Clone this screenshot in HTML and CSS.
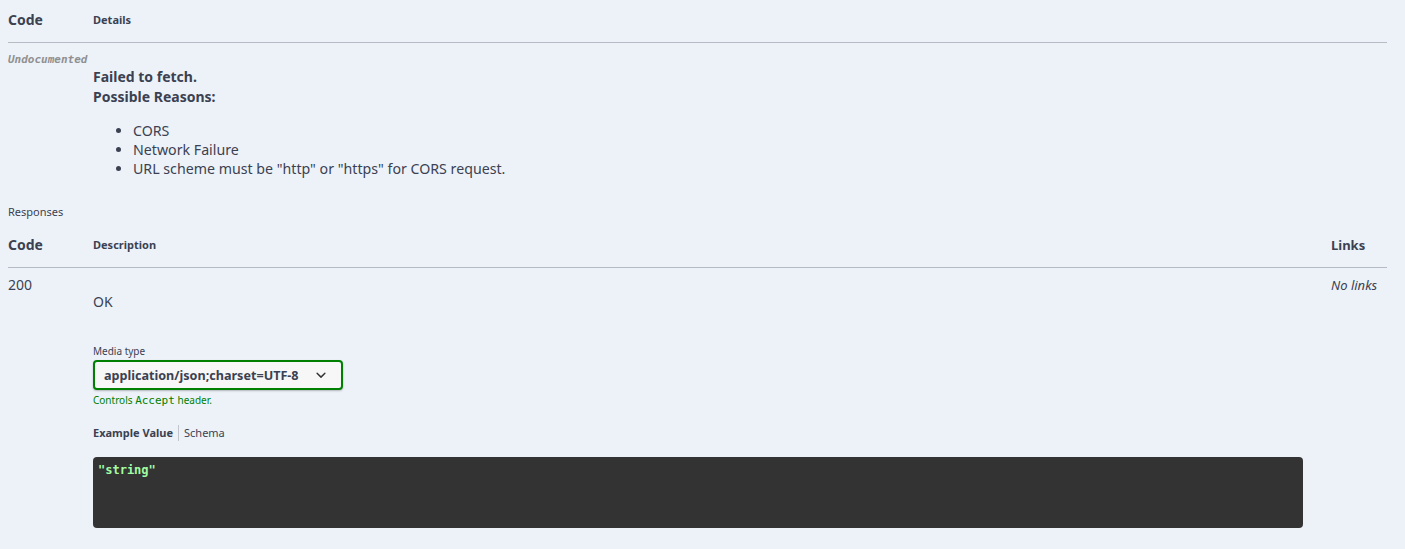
FILE: index.html
```html
<!DOCTYPE html>
<html lang="en">
<head>
<meta charset="utf-8">
<title>Responses</title>
<link rel="stylesheet" href="styles.css">
</head>
<body>
<div class="section">
  <div class="row head head-first">
    <div class="col-code th-code">Code</div>
    <div class="col-desc th">Details</div>
  </div>
  <div class="row">
    <div class="col-code undoc">Undocumented</div>
    <div class="col-desc err">
      <div class="err-title">Failed to fetch.</div>
      <div class="err-title">Possible Reasons:</div>
      <ul class="reasons">
        <li>CORS</li>
        <li>Network Failure</li>
        <li>URL scheme must be "http" or "https" for CORS request.</li>
      </ul>
    </div>
  </div>

  <div class="resp-label">Responses</div>

  <div class="row head head-second">
    <div class="col-code th-code">Code</div>
    <div class="col-desc th">Description</div>
    <div class="col-links th-links">Links</div>
  </div>
  <div class="row">
    <div class="col-code status">200</div>
    <div class="col-desc resp">
      <div class="ok">OK</div>
      <div class="media-title">Media type</div>
      <div class="select">
        <span class="select-text">application/json;charset=UTF-8</span>
        <svg class="chev" width="20" height="20" viewBox="0 0 20 20"><path d="M13.418 7.859a.695.695 0 01.978 0 .68.68 0 010 .969l-3.908 3.83a.697.697 0 01-.979 0l-3.908-3.83a.68.68 0 010-.969.695.695 0 01.978 0L10 11l3.418-3.141z" fill="#333"/></svg>
      </div>
      <div class="accept-msg">Controls <code>Accept</code> header.</div>
      <div class="tabs">
        <span class="tab active">Example Value</span>
        <span class="tab-sep"></span>
        <span class="tab">Schema</span>
      </div>
      <pre class="example">"string"</pre>
    </div>
    <div class="col-links nolinks">No links</div>
  </div>
</div>
</body>
</html>
```
FILE: styles.css
```css
html, body {
  margin: 0;
  padding: 0;
}
body {
  background: #edf2f9;
  color: #3b4151;
  font-family: "Noto Sans", "Noto Sans CJK KR", sans-serif;
  width: 1405px;
  height: 549px;
  overflow: hidden;
}
.section {
  padding: 0 18px 0 8px;
}
.row {
  display: flex;
}
.head {
  border-bottom: 1px solid #b6bcc6;
  padding-bottom: 12px;
}
.head-first {
  padding-top: 10px;
}
.head-second {
  padding-top: 15px;
}
.col-code {
  width: 85px;
  flex: none;
}
.col-desc {
  flex: none;
  width: 1210px;
}
.col-links {
  margin-left: 28px;
  flex: 1;
}
.th-code {
  font-size: 14px;
  font-weight: 700;
  line-height: 20px;
}
.th {
  font-size: 11px;
  font-weight: 700;
  line-height: 20px;
}
.th-links {
  font-size: 13px;
  font-weight: 700;
  line-height: 20px;
}
.undoc {
  padding-top: 10px;
  font-family: "DejaVu Sans Mono", "Liberation Mono", monospace;
  font-style: italic;
  font-weight: 700;
  font-size: 11px;
  line-height: 14px;
  color: #909090;
}
.err {
  padding-top: 24px;
}
.err-title {
  font-size: 14px;
  font-weight: 700;
  line-height: 20px;
}
.reasons {
  margin: 14px 0 0;
  padding-left: 40px;
  font-size: 14.2px;
  line-height: 19px;
}
.resp-label {
  margin-top: 26px;
  font-size: 11px;
  line-height: 16px;
}
.status {
  padding-top: 7px;
  font-size: 14px;
  line-height: 20px;
}
.resp {
  padding-top: 24px;
}
.ok {
  font-size: 14px;
  line-height: 20px;
}
.media-title {
  margin-top: 32px;
  font-size: 10px;
  line-height: 14px;
}
.select {
  margin-top: 2px;
  box-sizing: border-box;
  width: 250px;
  height: 30px;
  border: 2px solid #008000;
  border-radius: 4px;
  background: #f7f7f7;
  box-shadow: 0 1px 2px 0 rgba(0, 0, 0, 0.25);
  display: flex;
  align-items: center;
  justify-content: space-between;
  padding: 0 10px 0 9px;
}
.select-text {
  font-size: 12.6px;
  font-weight: 700;
  color: #3b4151;
}
.chev {
  display: block;
}
.accept-msg {
  margin-top: 3px;
  font-size: 10px;
  line-height: 14px;
  color: #008000;
}
.accept-msg code {
  font-family: "DejaVu Sans Mono", "Liberation Mono", monospace;
  font-size: 11px;
  font-weight: 400;
}
.tabs {
  margin-top: 17px;
  display: flex;
  align-items: center;
  font-size: 11px;
  line-height: 16px;
}
.tab.active {
  font-weight: 700;
}
.tab-sep {
  width: 1px;
  height: 16px;
  background: #c0c4cc;
  margin: 0 5px 0 5px;
}
.example {
  margin: 16px 0 0;
  box-sizing: border-box;
  width: 1210px;
  height: 71px;
  background: #333333;
  border-radius: 4px;
  padding: 6px 5px;
  font-family: "DejaVu Sans Mono", "Liberation Mono", monospace;
  font-size: 12px;
  font-weight: 700;
  line-height: 14px;
  color: #a2fca2;
}
.nolinks {
  padding-top: 7px;
  font-size: 13px;
  font-style: italic;
  line-height: 20px;
}
```
